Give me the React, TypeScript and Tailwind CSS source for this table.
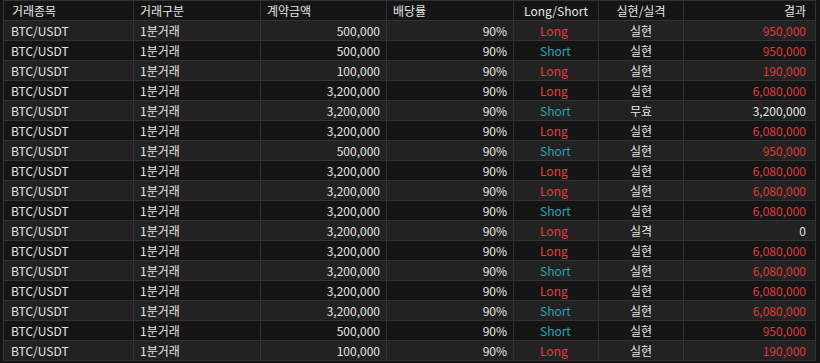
import React from 'react';

interface Trade {
  amount: string;
  side: 'Long' | 'Short';
  status: string;
  result: string;
  win: boolean;
}

const trades: Trade[] = [
  { amount: '500,000', side: 'Long', status: '실현', result: '950,000', win: true },
  { amount: '500,000', side: 'Short', status: '실현', result: '950,000', win: true },
  { amount: '100,000', side: 'Long', status: '실현', result: '190,000', win: true },
  { amount: '3,200,000', side: 'Long', status: '실현', result: '6,080,000', win: true },
  { amount: '3,200,000', side: 'Short', status: '무효', result: '3,200,000', win: false },
  { amount: '3,200,000', side: 'Long', status: '실현', result: '6,080,000', win: true },
  { amount: '500,000', side: 'Short', status: '실현', result: '950,000', win: true },
  { amount: '3,200,000', side: 'Long', status: '실현', result: '6,080,000', win: true },
  { amount: '3,200,000', side: 'Long', status: '실현', result: '6,080,000', win: true },
  { amount: '3,200,000', side: 'Short', status: '실현', result: '6,080,000', win: true },
  { amount: '3,200,000', side: 'Long', status: '실격', result: '0', win: false },
  { amount: '3,200,000', side: 'Long', status: '실현', result: '6,080,000', win: true },
  { amount: '3,200,000', side: 'Short', status: '실현', result: '6,080,000', win: true },
  { amount: '3,200,000', side: 'Long', status: '실현', result: '6,080,000', win: true },
  { amount: '3,200,000', side: 'Short', status: '실현', result: '6,080,000', win: true },
  { amount: '500,000', side: 'Short', status: '실현', result: '950,000', win: true },
  { amount: '100,000', side: 'Long', status: '실현', result: '190,000', win: true },
];

const cell = 'h-5 border border-[#333333] px-[6px] leading-none whitespace-nowrap';

export default function App() {
  return (
    <div
      className="min-h-screen bg-[#151515] pl-[3px] text-[12px] text-[#e6e6e6]"
      style={{ fontFamily: '"Noto Sans CJK KR", "Noto Sans", sans-serif' }}
    >
      <table className="w-[812px] table-fixed border-collapse">
        <colgroup>
          <col className="w-[130px]" />
          <col className="w-[127px]" />
          <col className="w-[126px]" />
          <col className="w-[127px]" />
          <col className="w-[85px]" />
          <col className="w-[85px]" />
          <col className="w-[132px]" />
        </colgroup>
        <thead>
          <tr className="bg-[#151515]">
            <th className={`${cell} text-left font-normal pl-[8px]`}>거래종목</th>
            <th className={`${cell} text-left font-normal`}>거래구분</th>
            <th className={`${cell} text-left font-normal`}>계약금액</th>
            <th className={`${cell} text-left font-normal`}>배당률</th>
            <th className={`${cell} text-center font-normal`}>Long/Short</th>
            <th className={`${cell} text-center font-normal`}>실현/실격</th>
            <th className={`${cell} text-right font-normal pr-[9px]`}>결과</th>
          </tr>
        </thead>
        <tbody>
          {trades.map((t, i) => (
            <tr key={i} className={i % 2 === 0 ? 'bg-[#222222]' : 'bg-[#151515]'}>
              <td className={`${cell} pl-[7px]`}>BTC/USDT</td>
              <td className={cell}>1분거래</td>
              <td className={`${cell} text-right`}>{t.amount}</td>
              <td className={`${cell} text-right`}>90%</td>
              <td className={`${cell} ${t.side === 'Long' ? 'text-[#e8413c]' : 'text-[#2aa3b3]'}`}>
                <span className="pl-[20px]">{t.side}</span>
              </td>
              <td className={`${cell} text-center`}>{t.status}</td>
              <td className={`${cell} text-right pr-[9px] ${t.win ? 'text-[#e03c3c]' : 'text-[#e6e6e6]'}`}>
                {t.result}
              </td>
            </tr>
          ))}
        </tbody>
      </table>
    </div>
  );
}
